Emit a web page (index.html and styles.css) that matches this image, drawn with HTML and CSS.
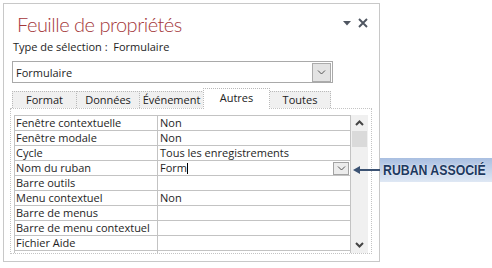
FILE: index.html
```html
<!DOCTYPE html>
<html lang="fr">
<head>
  <meta charset="UTF-8">
  <title>Feuille de propriétés</title>
  <link rel="stylesheet" href="styles.css">
</head>
<body>
  <div class="panel">
    <div class="head">
      <h1 class="title">Feuille de propriétés</h1>
      <div class="head-tools">
        <svg class="ico-caret" width="8" height="5" viewBox="0 0 8 5"><polygon points="0,0 8,0 4,4.5" fill="#4f5661"/></svg>
        <svg class="ico-close" width="10" height="10" viewBox="0 0 10 10"><path d="M1 1L9 9M9 1L1 9" stroke="#4f5661" stroke-width="1.9"/></svg>
      </div>
    </div>
    <div class="sel-type">Type de sélection :&nbsp; Formulaire</div>
    <div class="combo">
      <span class="combo-text">Formulaire</span>
      <span class="combo-btn"><svg width="9" height="5" viewBox="0 0 9 5"><path d="M1 0.5L4.5 4L8 0.5" stroke="#555" fill="none"/></svg></span>
    </div>
    <div class="tabs">
      <div class="tab tab-format">Format</div>
      <div class="tab tab-donnees">Données</div>
      <div class="tab tab-event">Événement</div>
      <div class="tab tab-autres active">Autres</div>
      <div class="tab tab-toutes">Toutes</div>
    </div>
    <div class="sheet">
      <div class="grid">
        <div class="row"><div class="name">Fenêtre contextuelle</div><div class="val">Non</div></div>
        <div class="row"><div class="name">Fenêtre modale</div><div class="val">Non</div></div>
        <div class="row"><div class="name">Cycle</div><div class="val">Tous les enregistrements</div></div>
        <div class="row"><div class="name">Nom du ruban</div><div class="val editing"><span>Form<span class="caret"></span></span><span class="cell-btn"><svg width="9" height="5" viewBox="0 0 9 5"><path d="M1 0.5L4.5 4L8 0.5" stroke="#555" fill="none"/></svg></span></div></div>
        <div class="row"><div class="name">Barre outils</div><div class="val"></div></div>
        <div class="row"><div class="name">Menu contextuel</div><div class="val">Non</div></div>
        <div class="row"><div class="name">Barre de menus</div><div class="val"></div></div>
        <div class="row"><div class="name">Barre de menu contextuel</div><div class="val"></div></div>
        <div class="row"><div class="name">Fichier Aide</div><div class="val"></div></div>
        <div class="row"><div class="name">&nbsp;</div><div class="val"></div></div>
      </div>
      <div class="scrollbar">
        <svg class="sb-arrow" width="9" height="6" viewBox="0 0 9 6"><path d="M1 5L4.5 1.5L8 5" stroke="#444" stroke-width="2" fill="none"/></svg>
        <div class="sb-thumb"></div>
        <div class="sb-track"></div>
        <svg class="sb-arrow" width="9" height="6" viewBox="0 0 9 6"><path d="M1 1L4.5 4.5L8 1" stroke="#444" stroke-width="2" fill="none"/></svg>
      </div>
    </div>
  </div>

  <!-- annotation -->
  <div class="callout">
    <svg class="callout-arrow" width="28" height="10" viewBox="0 0 28 10"><polygon points="0,5 7,1 7,9" fill="#3b5273"/><line x1="6" y1="5" x2="28" y2="5" stroke="#3b5273" stroke-width="2"/></svg>
    <div class="callout-label"><span>RUBAN ASSOCIÉ</span></div>
  </div>
</body>
</html>
```

FILE: styles.css
```css
/* Base */
* { margin: 0; padding: 0; box-sizing: border-box; }
body {
  font-family: 'Open Sans', 'Noto Sans', sans-serif;
  font-size: 11px;
  color: #1e1e1e;
  background: #fff;
  width: 492px;
  height: 268px;
  position: relative;
  overflow: hidden;
}
.panel {
  margin: 3px 0 0 3px;
  width: 377px;
  height: 259px;
  border: 1px solid #c8c8c8;
  padding: 5px 7px 0 6px;
}
/* Header */
.head {
  display: flex;
  align-items: center;
  justify-content: space-between;
  height: 28px;
}
.title {
  font-family: Lato, 'Open Sans', sans-serif;
  font-size: 20px;
  font-weight: 300;
  letter-spacing: -0.5px;
  line-height: 28px;
  color: #a4373a;
  padding: 1px 0 0 7px;
}
.head-tools {
  display: flex;
  align-items: center;
  gap: 7px;
  margin-right: 4px;
}
.ico-caret { margin-top: 1px; }
.sel-type {
  margin: 2px 0 0 3px;
  height: 16px;
  line-height: 16px;
}
/* Combo */
.combo {
  margin: 6px 0 0 2px;
  width: 321px;
  height: 22px;
  border: 1px solid #a9a9a9;
  display: flex;
  align-items: center;
  justify-content: space-between;
  padding: 0 1px 0 3px;
}
.combo-btn {
  width: 19px;
  height: 19px;
  background: #e3e3e3;
  border: 1px solid #ababab;
  display: flex;
  align-items: center;
  justify-content: center;
}
/* Tabs */
.tabs {
  display: flex;
  align-items: flex-end;
  height: 20px;
  margin: 5px 0 0 2px;
  position: relative;
  z-index: 1;
}
.tab {
  height: 17px;
  line-height: 16px;
  text-align: center;
  background: #f0f0f0;
  border: 1px dotted #b9b9b9;
  border-bottom: none;
  margin-left: -1px;
  color: #222;
}
.tab-format { width: 65px; margin-left: 0; }
.tab-donnees { width: 64px; }
.tab-event { width: 65px; }
.tab-autres { width: 67px; }
.tab-toutes { width: 62px; }
.tab.active {
  height: 21px;
  margin-bottom: -1px;
  background: #fff;
  line-height: 16px;
  padding-top: 1px;
  position: relative;
}
/* Property sheet */
.sheet {
  height: 146px;
  border: 1px dotted #c4c4c4;
  padding: 6px 3px 0 3px;
  display: flex;
}
.grid {
  width: 337px;
  height: 138px;
  overflow: hidden;
  border: 1px solid #c3c3c3;
  border-bottom: none;
}
.row {
  display: grid;
  grid-template-columns: 143px 1fr;
  height: 15px;
  border-bottom: 1px solid #c3c3c3;
}
.name, .val {
  line-height: 14px;
  padding-left: 1px;
  white-space: nowrap;
}
.name { border-right: 1px solid #c3c3c3; }
.val { padding-left: 2px; }
.editing {
  display: flex;
  justify-content: space-between;
  align-items: center;
  padding-right: 1px;
}
.caret {
  display: inline-block;
  width: 1px;
  height: 11px;
  background: #000;
  vertical-align: -2px;
}
.cell-btn {
  width: 16px;
  height: 13px;
  border: 1px solid #a3a3a3;
  background: #ececec;
  display: flex;
  align-items: center;
  justify-content: center;
}
/* Scrollbar */
.scrollbar {
  width: 17px;
  height: 138px;
  background: #f0f0f0;
  display: flex;
  flex-direction: column;
  align-items: center;
}
.sb-arrow { margin: 5px 0 5px; }
.sb-thumb {
  width: 15px;
  height: 16px;
  background: #dadada;
}
.sb-track { flex: 1; }
/* Annotation */
.callout {
  position: absolute;
  left: 353px;
  top: 158px;
  display: flex;
  align-items: center;
}
.callout-label {
  width: 112px;
  height: 24px;
  margin-left: -1px;
  background: linear-gradient(to bottom, #a9bfe1, #dfe8f4);
  color: #1d3960;
  font-family: 'Liberation Sans', sans-serif;
  font-weight: 700;
  font-size: 15px;
  line-height: 24px;
  padding-left: 3px;
  text-shadow: 0 0 2px #fff;
  white-space: nowrap;
}
.callout-label span {
  display: inline-block;
  transform: scaleX(0.82);
  transform-origin: left center;
}
```
